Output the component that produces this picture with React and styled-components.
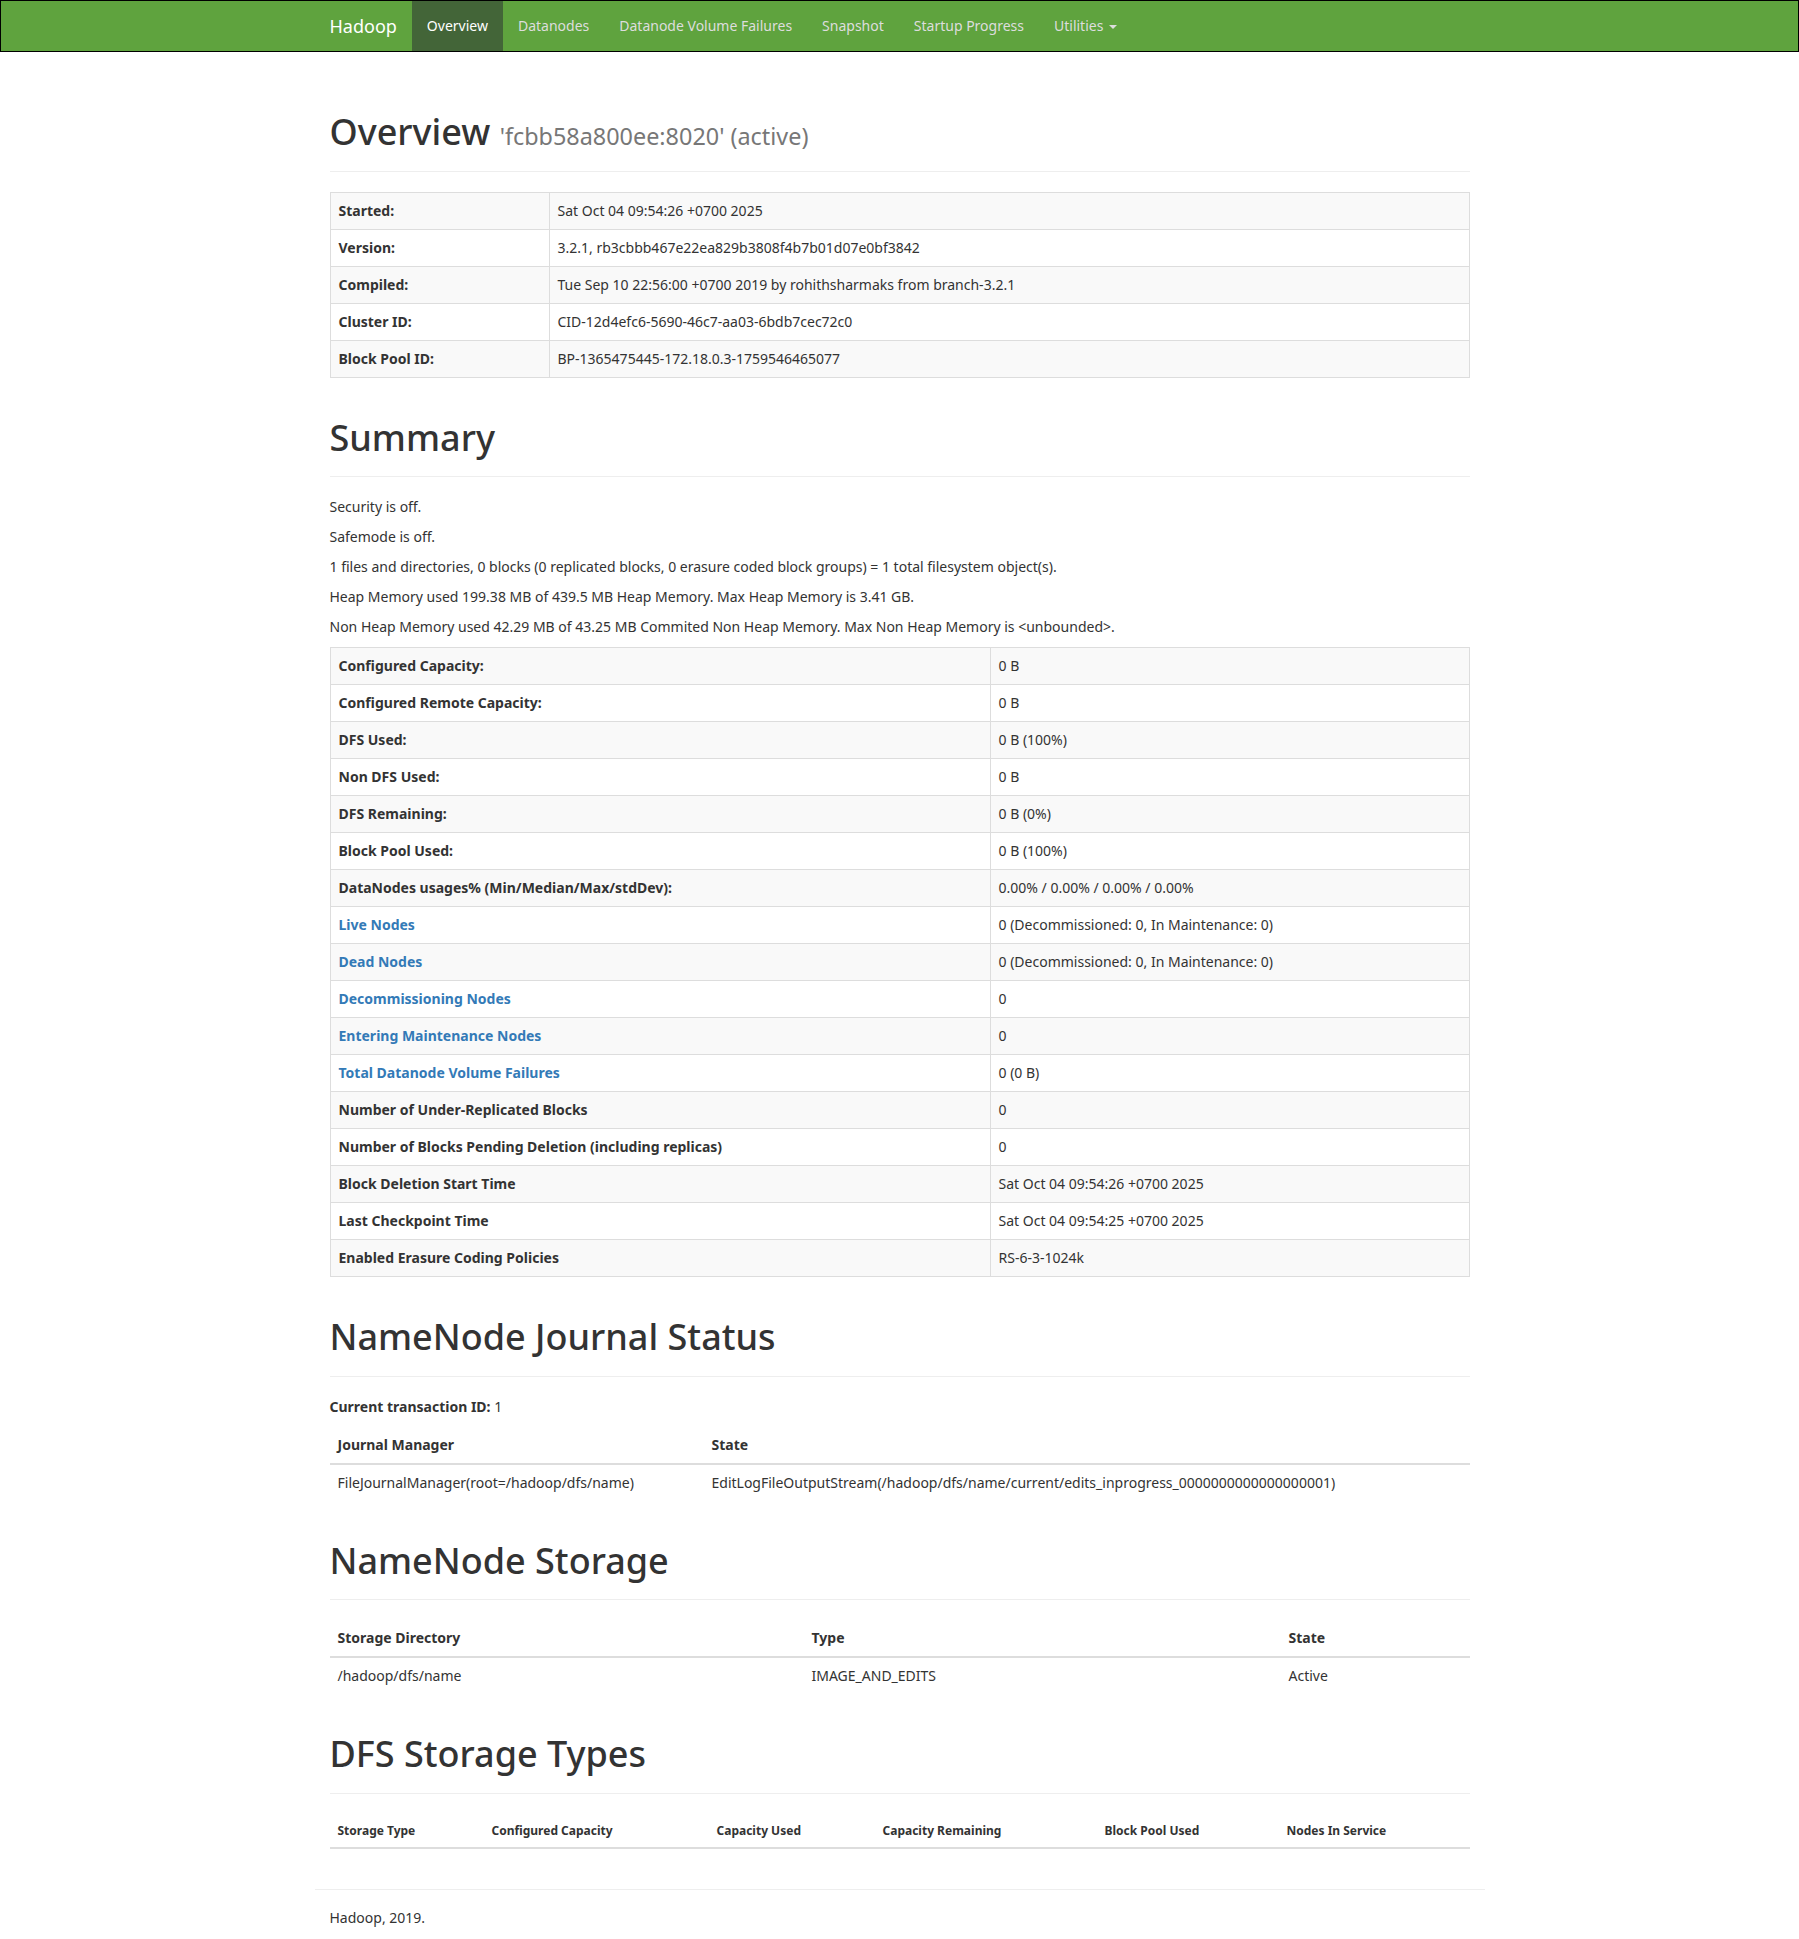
import React from "react";
import styled, { createGlobalStyle } from "styled-components";

const GlobalStyle = createGlobalStyle`
  html, body {
    margin: 0;
    padding: 0;
    background: #fff;
  }
  body {
    font-family: "Noto Sans", "Open Sans", sans-serif;
    font-size: 14px;
    line-height: 1.42857143;
    color: #333;
  }
  * {
    box-sizing: border-box;
  }
`;

const overview = [
  ["Started:", "Sat Oct 04 09:54:26 +0700 2025"],
  ["Version:", "3.2.1, rb3cbbb467e22ea829b3808f4b7b01d07e0bf3842"],
  ["Compiled:", "Tue Sep 10 22:56:00 +0700 2019 by rohithsharmaks from branch-3.2.1"],
  ["Cluster ID:", "CID-12d4efc6-5690-46c7-aa03-6bdb7cec72c0"],
  ["Block Pool ID:", "BP-1365475445-172.18.0.3-1759546465077"],
];

const summaryText = [
  "Security is off.",
  "Safemode is off.",
  "1 files and directories, 0 blocks (0 replicated blocks, 0 erasure coded block groups) = 1 total filesystem object(s).",
  "Heap Memory used 199.38 MB of 439.5 MB Heap Memory. Max Heap Memory is 3.41 GB.",
  "Non Heap Memory used 42.29 MB of 43.25 MB Commited Non Heap Memory. Max Non Heap Memory is <unbounded>.",
];

const summary = [
  ["Configured Capacity:", "0 B"],
  ["Configured Remote Capacity:", "0 B"],
  ["DFS Used:", "0 B (100%)"],
  ["Non DFS Used:", "0 B"],
  ["DFS Remaining:", "0 B (0%)"],
  ["Block Pool Used:", "0 B (100%)"],
  ["DataNodes usages% (Min/Median/Max/stdDev):", "0.00% / 0.00% / 0.00% / 0.00%"],
  ["Live Nodes", "0 (Decommissioned: 0, In Maintenance: 0)", true],
  ["Dead Nodes", "0 (Decommissioned: 0, In Maintenance: 0)", true],
  ["Decommissioning Nodes", "0", true],
  ["Entering Maintenance Nodes", "0", true],
  ["Total Datanode Volume Failures", "0 (0 B)", true],
  ["Number of Under-Replicated Blocks", "0"],
  ["Number of Blocks Pending Deletion (including replicas)", "0"],
  ["Block Deletion Start Time", "Sat Oct 04 09:54:26 +0700 2025"],
  ["Last Checkpoint Time", "Sat Oct 04 09:54:25 +0700 2025"],
  ["Enabled Erasure Coding Policies", "RS-6-3-1024k"],
];

const navItems = ["Overview", "Datanodes", "Datanode Volume Failures", "Snapshot", "Startup Progress"];

const storageTypeCols = [
  ["Storage Type", 154],
  ["Configured Capacity", 225],
  ["Capacity Used", 166],
  ["Capacity Remaining", 222],
  ["Block Pool Used", 182],
  ["Nodes In Service", 191],
];

export default function App() {
  return (
    <>
      <GlobalStyle />
      <Navbar>
        <NavContainer>
          <Brand href="#">Hadoop</Brand>
          <NavList>
            {navItems.map((item, i) => (
              <NavItem key={item} $active={i === 0}>
                <a href="#">{item}</a>
              </NavItem>
            ))}
            <NavItem>
              <a href="#">
                Utilities <Caret />
              </a>
            </NavItem>
          </NavList>
        </NavContainer>
      </Navbar>

      <Main>
        <PageHeader>
          <h1>
            Overview <small>'fcbb58a800ee:8020' (active)</small>
          </h1>
        </PageHeader>

        <BorderedTable $labelWidth={219}>
          <tbody>
            {overview.map(([k, v]) => (
              <tr key={k}>
                <th>{k}</th>
                <td>{v}</td>
              </tr>
            ))}
          </tbody>
        </BorderedTable>

        <PageHeader>
          <h1>Summary</h1>
        </PageHeader>

        {summaryText.map((t) => (
          <Para key={t}>{t}</Para>
        ))}

        <BorderedTable $labelWidth={660}>
          <tbody>
            {summary.map(([k, v, link]) => (
              <tr key={k}>
                <th>{link ? <a href="#">{k}</a> : k}</th>
                <td>{v}</td>
              </tr>
            ))}
          </tbody>
        </BorderedTable>

        <PageHeader>
          <h1>NameNode Journal Status</h1>
        </PageHeader>
        <Para>
          <b>Current transaction ID:</b> 1
        </Para>
        <PlainTable>
          <thead>
            <tr>
              <th style={{ width: 374 }}>Journal Manager</th>
              <th>State</th>
            </tr>
          </thead>
          <tbody>
            <tr>
              <td>FileJournalManager(root=/hadoop/dfs/name)</td>
              <td>EditLogFileOutputStream(/hadoop/dfs/name/current/edits_inprogress_0000000000000000001)</td>
            </tr>
          </tbody>
        </PlainTable>

        <PageHeader>
          <h1>NameNode Storage</h1>
        </PageHeader>
        <PlainTable>
          <thead>
            <tr>
              <th style={{ width: 474 }}>Storage Directory</th>
              <th style={{ width: 477 }}>Type</th>
              <th>State</th>
            </tr>
          </thead>
          <tbody>
            <tr>
              <td>/hadoop/dfs/name</td>
              <td>IMAGE_AND_EDITS</td>
              <td>Active</td>
            </tr>
          </tbody>
        </PlainTable>

        <PageHeader>
          <h1>DFS Storage Types</h1>
        </PageHeader>
        <PlainTable $small>
          <thead>
            <tr>
              {storageTypeCols.map(([c, w]) => (
                <th key={c} style={{ width: w }}>
                  {c}
                </th>
              ))}
            </tr>
          </thead>
          <tbody />
        </PlainTable>

        <FooterRow>
          <hr />
          <Para>Hadoop, 2019.</Para>
        </FooterRow>
      </Main>
    </>
  );
}

const Navbar = styled.nav`
  height: 52px;
  background: #5fa33e;
  border: 1px solid #000;
`;

const NavContainer = styled.div`
  width: 1170px;
  margin: 0 auto;
  padding: 0 15px;
  display: flex;
  align-items: stretch;
  height: 50px;
`;

const Brand = styled.a`
  margin-left: -15px;
  padding: 15px;
  font-size: 18px;
  line-height: 20px;
  color: #fff;
  text-decoration: none;
`;

const NavList = styled.ul`
  display: flex;
  margin: 0;
  padding: 0;
  list-style: none;
`;

const NavItem = styled.li`
  a {
    display: block;
    padding: 15px;
    line-height: 20px;
    color: ${(p) => (p.$active ? "#fff" : "#ddd")};
    background: ${(p) => (p.$active ? "#436538" : "transparent")};
    text-decoration: none;
  }
`;

const Caret = styled.span`
  display: inline-block;
  width: 0;
  height: 0;
  margin-left: 2px;
  vertical-align: middle;
  border-top: 4px solid;
  border-right: 4px solid transparent;
  border-left: 4px solid transparent;
`;

const Main = styled.main`
  width: 1170px;
  margin: 0 auto;
  padding: 20px 15px 0;
  overflow: hidden;
`;

const PageHeader = styled.div`
  margin: 40px 0 20px;
  padding-bottom: 9px;
  border-bottom: 1px solid #eee;

  h1 {
    margin: 0 0 10px;
    font-size: 36px;
    font-weight: 500;
    line-height: 1.1;
    color: #333;
  }

  small {
    font-size: 65%;
    font-weight: normal;
    color: #777;
  }
`;

const Para = styled.p`
  margin: 0 0 10px;

  b {
    font-weight: 700;
  }
`;

const BorderedTable = styled.table`
  width: 100%;
  border-collapse: collapse;
  border-spacing: 0;
  margin-bottom: 20px;
  border: 1px solid #ddd;

  th,
  td {
    padding: 8px;
    line-height: 20px;
    border: 1px solid #ddd;
    vertical-align: top;
    text-align: left;
  }

  th {
    width: ${(p) => p.$labelWidth}px;
    font-weight: 700;
  }

  tbody tr:nth-of-type(odd) {
    background: #f9f9f9;
  }

  a {
    color: #337ab7;
    text-decoration: none;
  }
`;

const PlainTable = styled.table`
  width: 100%;
  border-collapse: collapse;
  border-spacing: 0;
  margin-bottom: 20px;

  th,
  td {
    padding: 8px;
    line-height: 20px;
    vertical-align: top;
    text-align: left;
  }

  th {
    font-weight: 700;
    font-size: ${(p) => (p.$small ? "12px" : "14px")};
    line-height: ${(p) => (p.$small ? "17px" : "20px")};
    border-bottom: 2px solid #ddd;
    vertical-align: bottom;
  }

  td {
    border-top: 1px solid #ddd;
  }
`;

const FooterRow = styled.footer`
  margin: 0 -15px;

  hr {
    margin: 40px 0 18px;
    border: 0;
    border-top: 1px solid #eee;
  }

  p {
    padding: 0 15px;
  }
`;
